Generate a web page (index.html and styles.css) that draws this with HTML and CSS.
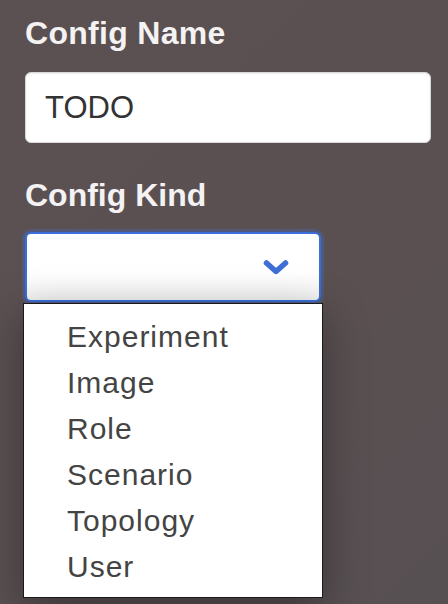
FILE: index.html
```html
<!DOCTYPE html>
<html>
<head>
<meta charset="utf-8">
<link rel="stylesheet" href="styles.css">
</head>
<body>
<div class="form">
  <div class="label label-name">Config Name</div>
  <div class="input">TODO</div>
  <div class="label label-kind">Config Kind</div>
  <div class="select-wrap">
    <div class="select">
      <svg class="chev" width="28" height="20" viewBox="0 0 28 20"><path d="M4.5 5 L14 13.5 L23.5 5" fill="none" stroke="#3d6fd6" stroke-width="5.5" stroke-linecap="round" stroke-linejoin="round"/></svg>
    </div>
    <ul class="menu">
      <li>Experiment</li>
      <li>Image</li>
      <li>Role</li>
      <li>Scenario</li>
      <li>Topology</li>
      <li>User</li>
    </ul>
  </div>
</div>
</body>
</html>
```
FILE: styles.css
```css
html, body {
  margin: 0;
  padding: 0;
  height: 100%;
}
body {
  background: linear-gradient(135deg, #5b5153 0%, #5a5052 60%, #575052 100%);
  font-family: "Liberation Sans", Arial, sans-serif;
  overflow: hidden;
}
.form {
  padding: 0 17px 0 25px;
  display: flex;
  flex-direction: column;
}
.label {
  color: #f4f2f2;
  font-weight: bold;
  font-size: 32px;
  line-height: 36px;
}
.label-name {
  margin-top: 15px;
  letter-spacing: 0.3px;
}
.input {
  margin-top: 21px;
  height: 71px;
  box-sizing: border-box;
  background: #fff;
  border: 1px solid #d8d8d8;
  border-radius: 6px;
  color: #333;
  font-size: 31px;
  line-height: 69px;
  padding-left: 19px;
  box-shadow: inset 0 1px 2px rgba(0,0,0,0.08);
}
.label-kind {
  margin-top: 34px;
}
.select-wrap {
  position: relative;
  margin-top: 19px;
  width: 296px;
}
.select {
  height: 70px;
  box-sizing: border-box;
  border: 2px solid #3b6ed8;
  border-radius: 6px;
  background: linear-gradient(180deg, #ffffff 0%, #ffffff 58%, #f1f1f1 100%);
  box-shadow: 0 0 0 3px rgba(70, 100, 170, 0.45);
  display: flex;
  align-items: center;
  justify-content: flex-end;
  padding-right: 29px;
}
.chev {
  display: block;
  margin-top: 2px;
}
.menu {
  position: absolute;
  top: 71px;
  left: -2px;
  width: 300px;
  box-sizing: border-box;
  margin: 0;
  padding: 10px 0 7px 43px;
  list-style: none;
  background: #fff;
  border: 1px solid #1a1a1a;
  box-shadow: 0 12px 40px rgba(0,0,0,0.35);
}
.menu li {
  font-size: 30px;
  line-height: 46px;
  letter-spacing: 1px;
  color: #444;
}
```
